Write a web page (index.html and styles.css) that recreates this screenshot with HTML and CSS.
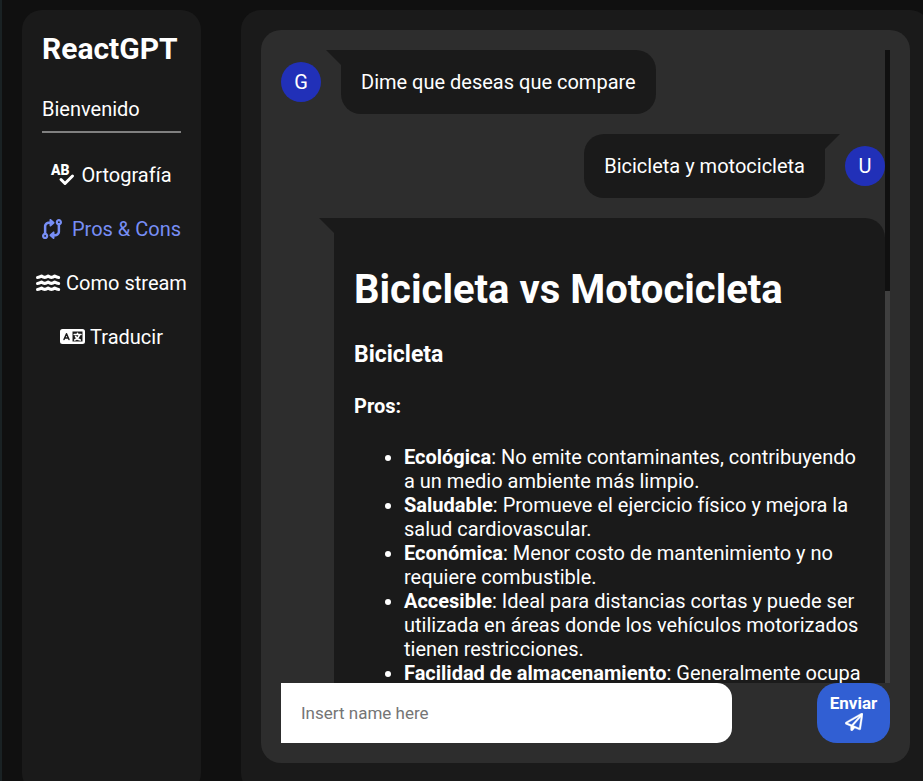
FILE: index.html
```html
<!DOCTYPE html>
<html lang="es">
<head>
<meta charset="utf-8">
<title>ReactGPT</title>
<link rel="stylesheet" href="styles.css">
</head>
<body>
<div class="app">
  <nav class="sidebar">
    <h1 class="brand">ReactGPT</h1>
    <p class="welcome">Bienvenido</p>
    <hr class="rule">
    <div class="links">
      <a class="link" href="#ortografia">
        <svg class="icon" viewBox="0 0 25 20" width="25" height="20" aria-hidden="true">
          <text x="0" y="10" class="icon-letters">AB</text>
          <path d="M10 14.500l4 4L21.500 11" fill="none" stroke="currentColor" stroke-width="3" stroke-linecap="round" stroke-linejoin="round"/>
        </svg>
        <span>Ortografía</span>
      </a>
      <a class="link active" href="#pros-cons">
        <svg class="icon" viewBox="0 0 512 512" width="20" height="20" aria-hidden="true"><path fill="currentColor" d="M320 488c0 9.500-5.600 18.100-14.200 21.900s-18.800 2.300-25.800-4.100l-80-72c-5.100-4.600-7.900-11-7.900-17.800s2.900-13.300 7.900-17.800l80-72c7-6.300 17.200-7.900 25.800-4.100s14.200 12.400 14.200 21.900l0 40 16 0c35.300 0 64-28.700 64-64l0-166.700C371.700 141 352 112.800 352 80c0-44.200 35.800-80 80-80s80 35.800 80 80c0 32.800-19.700 61-48 73.300L464 320c0 70.700-57.300 128-128 128l-16 0 0 40zM456 80a24 24 0 1 0 -48 0 24 24 0 1 0 48 0zM192 24c0-9.500 5.600-18.100 14.200-21.900s18.800-2.300 25.800 4.100l80 72c5.100 4.600 7.900 11 7.900 17.800s-2.900 13.300-7.900 17.800l-80 72c-7 6.300-17.200 7.900-25.800 4.100s-14.200-12.400-14.200-21.900l0-40-16 0c-35.300 0-64 28.700-64 64l0 166.700c28.300 12.300 48 40.500 48 73.300c0 44.200-35.800 80-80 80s-80-35.800-80-80c0-32.800 19.700-61 48-73.300L48 192c0-70.700 57.300-128 128-128l16 0 0-40zM56 432a24 24 0 1 0 48 0 24 24 0 1 0 -48 0z"/></svg>
        <span>Pros &amp; Cons</span>
      </a>
      <a class="link" href="#stream">
        <svg class="icon" viewBox="0 0 25 20" width="25" height="20" aria-hidden="true">
          <g fill="none" stroke="currentColor" stroke-width="3" stroke-linecap="round" stroke-linejoin="round">
            <path id="wave" d="M1.500 4.500q2-.2 4-1.500 3.300 2.800 6.600 0 3.300 2.800 6.600 0 2 1.300 4 1.500"/>
            <use href="#wave" y="6"/>
            <use href="#wave" y="12"/>
          </g>
        </svg>
        <span>Como stream</span>
      </a>
      <a class="link" href="#traducir">
        <svg class="icon" viewBox="0 0 25 20" width="25" height="20" aria-hidden="true">
          <path fill="currentColor" fill-rule="evenodd" d="M2.500 2h20a2.500 2.500 0 0 1 2.500 2.500v10a2.500 2.500 0 0 1-2.500 2.500h-20A2.500 2.500 0 0 1 0 14.500V4.500A2.500 2.500 0 0 1 2.500 2zM12.500 4.500v10h10V4.500z"/>
          <path fill="none" stroke="#1a1a1a" stroke-width="1.500" stroke-linecap="round" stroke-linejoin="round" d="M4 12.500L6.500 6.800 9 12.500M5 10.900h3"/>
          <path fill="none" stroke="currentColor" stroke-width="1.600" stroke-linecap="round" d="M14.200 7.500h6.800M17.500 6.200v1.300M19.500 8q-1.200 3.600-4.800 5M15.600 9.500q1.600 2.800 4.700 3.500"/>
        </svg>
        <span>Traducir</span>
      </a>
    </div>
  </nav>

  <main class="main">
    <section class="chat">
      <div class="viewport">
        <div class="messages">
          <div class="row">
            <div class="avatar">G</div>
            <div class="bubble left">Dime que deseas que compare</div>
          </div>
          <div class="row own">
            <div class="bubble right">Bicicleta y motocicleta</div>
            <div class="avatar">U</div>
          </div>
          <div class="row answer">
            <article class="bubble left">
              <h1>Bicicleta vs Motocicleta</h1>
              <h3>Bicicleta</h3>
              <p><strong>Pros:</strong></p>
              <ul>
                <li><strong>Ecológica</strong>: No emite contaminantes, contribuyendo a un medio ambiente más limpio.</li>
                <li><strong>Saludable</strong>: Promueve el ejercicio físico y mejora la salud cardiovascular.</li>
                <li><strong>Económica</strong>: Menor costo de mantenimiento y no requiere combustible.</li>
                <li><strong>Accesible</strong>: Ideal para distancias cortas y puede ser utilizada en áreas donde los vehículos motorizados tienen restricciones.</li>
                <li><strong>Facilidad de almacenamiento</strong>: Generalmente ocupa</li>
              </ul>
            </article>
          </div>
        </div>
        <div class="track"><div class="thumb"></div></div>
      </div>
      <form class="composer">
        <input class="field" type="text" placeholder="Insert name here" aria-label="Insert name here">
        <button class="send" type="button">
          <span>Enviar</span>
          <svg viewBox="0 0 512 512" width="18" height="18" aria-hidden="true"><path fill="currentColor" stroke="currentColor" stroke-width="10" d="M16.100 260.200c-22.600 12.900-20.500 47.300 3.600 57.300L160 376V479.300c0 18.100 14.600 32.700 32.700 32.700c9.700 0 18.900-4.300 25.100-11.800l62-74.300 123.900 51.600c18.900 7.900 40.800-4.500 43.900-24.700l64-416c1.900-12.100-3.400-24.300-13.500-31.200s-23.300-7.500-34-1.400l-448 256zm52.100 25.500L409.700 90.600 190.100 336l1.200 1L68.200 285.700zM403.300 425.400L236.700 355.900 450.800 116.600 403.300 425.400z"/></svg>
        </button>
      </form>
    </section>
  </main>
</div>
</body>
</html>
```
FILE: styles.css
```css
* { box-sizing: border-box; }

body {
  margin: 0;
  height: 100vh;
  overflow: hidden;
  background: #101010;
  color: #fff;
  font-family: Roboto, "Liberation Sans", sans-serif;
  font-size: 20px;
  line-height: 24px;
}

.app {
  display: grid;
  grid-template-columns: 179px 1fr;
  grid-template-rows: minmax(0, 1fr);
  gap: 40px;
  height: calc(100vh + 22px);
  margin-right: -7px;
  padding: 10px 0 10px 20px;
  border-left: 2px solid #1a2224;
}

.sidebar,
.main {
  min-width: 0;
  background: #1a1a1a;
  border-radius: 20px;
}

.sidebar { padding: 20px; }

.brand {
  margin: 0 0 29px;
  font-size: 30px;
  line-height: 38px;
}

.welcome { margin: 0 0 10px; }

.rule {
  margin: 0 0 20px;
  border: 0;
  height: 2px;
  background: #808080;
}

.links {
  display: flex;
  flex-direction: column;
  align-items: center;
}

.link {
  display: flex;
  align-items: center;
  gap: 5px;
  padding: 10px 0;
  margin-bottom: 10px;
  color: #fff;
  text-decoration: none;
  white-space: nowrap;
}

.link.active { gap: 10px; color: #778ef5; }

.icon {
  flex: none;
  overflow: visible;
}

.icon-letters {
  font-size: 14px;
  font-weight: 900;
  fill: currentColor;
}

.main { padding: 20px 20px 30px; }

.chat {
  display: flex;
  flex-direction: column;
  height: 100%;
  padding: 20px;
  background: #2d2d2d;
  border-radius: 20px;
}

.viewport {
  display: flex;
  flex: 1;
  min-height: 0;
  overflow: hidden;
}

.messages {
  display: flex;
  flex: 1;
  flex-direction: column;
  gap: 20px;
  min-width: 0;
}

.row {
  display: flex;
  flex: none;
  align-items: center;
  gap: 20px;
}

.own { justify-content: flex-end; }

.answer { padding-left: 53px; }

.avatar {
  display: grid;
  place-items: center;
  width: 40px;
  height: 40px;
  border-radius: 50%;
  background: #2130b8;
}

.bubble {
  position: relative;
  padding: 20px;
  background: #1a1a1a;
  border-radius: 20px;
}

.bubble.left { border-top-left-radius: 0; }
.bubble.right { border-top-right-radius: 0; }

.bubble::before {
  content: "";
  position: absolute;
  top: 0;
  width: 15px;
  height: 15px;
  background: #1a1a1a;
}

.bubble.left::before {
  right: 100%;
  clip-path: polygon(0 0, 100% 0, 100% 100%);
}

.bubble.right::before {
  left: 100%;
  clip-path: polygon(0 0, 100% 0, 0 100%);
}

article { flex: 1; }

article h1 {
  margin: 28px 0 27px;
  font-size: 40px;
  line-height: 48px;
}

article h3 {
  margin: 0 0 25px;
  font-size: 23px;
  line-height: 28px;
}

article p { margin: 0 0 27px; }

article ul {
  margin: 0;
  padding-left: 50px;
}

.track {
  flex: none;
  width: 5px;
  background: #3f3f3f;
}

.thumb {
  height: 38%;
  background: #101010;
}

.composer {
  display: flex;
  flex: none;
  justify-content: space-between;
  height: 60px;
}

.field {
  width: 74%;
  padding: 0 20px;
  border: 0;
  border-radius: 0 15px 15px 0;
  background: #fff;
  font: 17px Roboto, "Liberation Sans", sans-serif;
}

.field::placeholder { color: #757575; }

.send {
  display: flex;
  flex-direction: column;
  align-items: center;
  justify-content: center;
  width: 73px;
  padding: 0 0 2px;
  border: 0;
  border-radius: 20px;
  background: #315fd3;
  color: #fff;
  font: bold 17px/20px Roboto, "Liberation Sans", sans-serif;
}
```
